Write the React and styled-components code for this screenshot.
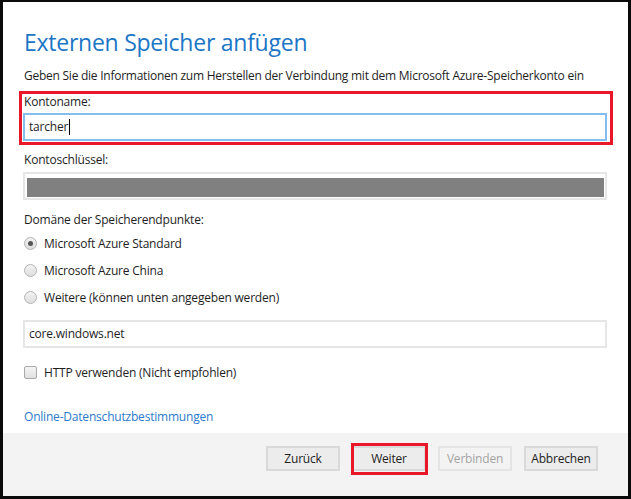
import styled, { createGlobalStyle } from "styled-components";

const GlobalStyle = createGlobalStyle`
  html, body {
    margin: 0;
    padding: 0;
    background: #fff;
  }
  * {
    box-sizing: border-box;
  }
`;

function App() {
  return (
    <>
      <GlobalStyle />
      <Dialog>
        <Content>
          <Title>Externen Speicher anfügen</Title>
          <Intro>
            Geben Sie die Informationen zum Herstellen der Verbindung mit dem Microsoft Azure-Speicherkonto ein
          </Intro>

          <Highlight>
            <Label>Kontoname:</Label>
            <TextBox focused>
              tarcher
              <Caret />
            </TextBox>
          </Highlight>

          <Label top={7}>Kontoschlüssel:</Label>
          <SecretBox>
            <Masked />
          </SecretBox>

          <Label top={12}>Domäne der Speicherendpunkte:</Label>
          <RadioList>
            <RadioRow>
              <Radio checked />
              Microsoft Azure Standard
            </RadioRow>
            <RadioRow>
              <Radio />
              Microsoft Azure China
            </RadioRow>
            <RadioRow>
              <Radio />
              Weitere (können unten angegeben werden)
            </RadioRow>
          </RadioList>

          <TextBox top={9}>core.windows.net</TextBox>

          <CheckRow>
            <CheckBox />
            HTTP verwenden (Nicht empfohlen)
          </CheckRow>

          <PrivacyLink href="#">Online-Datenschutzbestimmungen</PrivacyLink>
        </Content>

        <Footer>
          <Button>Zurück</Button>
          <Button marked>Weiter</Button>
          <Button disabled>Verbinden</Button>
          <Button>Abbrechen</Button>
        </Footer>
      </Dialog>
    </>
  );
}

const Dialog = styled.div`
  width: 631px;
  height: 499px;
  border: 3px solid #0a0a0a;
  border-top-width: 2px;
  background: #fff;
  display: flex;
  flex-direction: column;
  font-family: "Open Sans", "Noto Sans", sans-serif;
  font-size: 12px;
  color: #1e1e1e;
`;

const Content = styled.div`
  flex: 1;
  padding: 24px 21px 0 20px;
  display: flex;
  flex-direction: column;
  align-items: stretch;
`;

const Title = styled.h1`
  margin: 0 0 0 1px;
  font-size: 23px;
  line-height: 32px;
  font-weight: 400;
  letter-spacing: -0.25px;
  color: #1c76c6;
`;

const Intro = styled.p`
  margin: 10px 0 0 1px;
  line-height: 16px;
  white-space: nowrap;
  letter-spacing: -0.25px;
`;

const Highlight = styled.div`
  margin: 7px -6px 0 -4px;
  border: 3px solid #e8182a;
  padding: 0 3px 1px 1px;
`;

const Label = styled.div`
  margin-top: ${(p) => p.top || 0}px;
  margin-left: 1px;
  line-height: 16px;
  letter-spacing: -0.2px;
`;

const TextBox = styled.div`
  position: relative;
  margin-top: ${(p) => (p.top != null ? p.top : 3)}px;
  height: 28px;
  border: 2px solid ${(p) => (p.focused ? "#86bdf0" : "#e6e6e6")};
  padding: 0 4px;
  display: flex;
  align-items: center;
  line-height: 16px;
  letter-spacing: -0.2px;
  background: #fff;
`;

const Caret = styled.span`
  display: inline-block;
  width: 1px;
  height: 16px;
  margin-left: 1px;
  background: #000;
`;

const SecretBox = styled.div`
  margin-top: 4px;
  height: 28px;
  border: 2px solid #e6e6e6;
  padding: 4px 1px 1px 2px;
  display: flex;
`;

const Masked = styled.div`
  flex: 1;
  background: #808080;
`;

const RadioList = styled.div`
  margin-top: 2px;
  display: flex;
  flex-direction: column;
`;

const RadioRow = styled.label`
  height: 27px;
  display: flex;
  align-items: center;
  gap: 7px;
  padding-left: 1px;
  letter-spacing: -0.2px;
`;

const Radio = styled.span`
  width: 13px;
  height: 13px;
  border-radius: 50%;
  border: 1px solid #b4b4b4;
  background: linear-gradient(#f2f2f2, #dedede);
  display: flex;
  align-items: center;
  justify-content: center;
  &::after {
    content: "";
    width: 5px;
    height: 5px;
    border-radius: 50%;
    background: ${(p) => (p.checked ? "#555" : "transparent")};
  }
`;

const CheckRow = styled.label`
  margin-top: 16px;
  height: 16px;
  display: flex;
  align-items: center;
  gap: 7px;
  padding-left: 1px;
  letter-spacing: -0.2px;
`;

const CheckBox = styled.span`
  width: 13px;
  height: 13px;
  border-radius: 2px;
  border: 1px solid #a9a9a9;
  background: linear-gradient(#f4f4f4, #e0e0e0);
`;

const PrivacyLink = styled.a`
  margin: 29px 0 0 1px;
  line-height: 16px;
  color: #2b7acb;
  text-decoration: none;
  letter-spacing: -0.2px;
  align-self: flex-start;
`;

const Footer = styled.div`
  height: 63px;
  background: #f3f3f3;
  display: flex;
  justify-content: flex-end;
  align-items: flex-start;
  gap: 12px;
  padding: 13px 30px 0 0;
`;

const Button = styled.button`
  position: relative;
  width: 74px;
  height: 25px;
  border: 2px solid ${(p) => (p.disabled ? "#e4e4e4" : "#d9d9d9")};
  background: ${(p) => (p.disabled ? "#f3f3f3" : "#ececec")};
  color: ${(p) => (p.disabled ? "#a4a4a4" : "#1e1e1e")};
  font-family: inherit;
  font-size: 12px;
  letter-spacing: -0.2px;
  padding: 0;
  &::after {
    content: "";
    display: ${(p) => (p.marked ? "block" : "none")};
    position: absolute;
    inset: -5px -4px -6px -3px;
    border: 3px solid #e8182a;
  }
`;

export default App;
